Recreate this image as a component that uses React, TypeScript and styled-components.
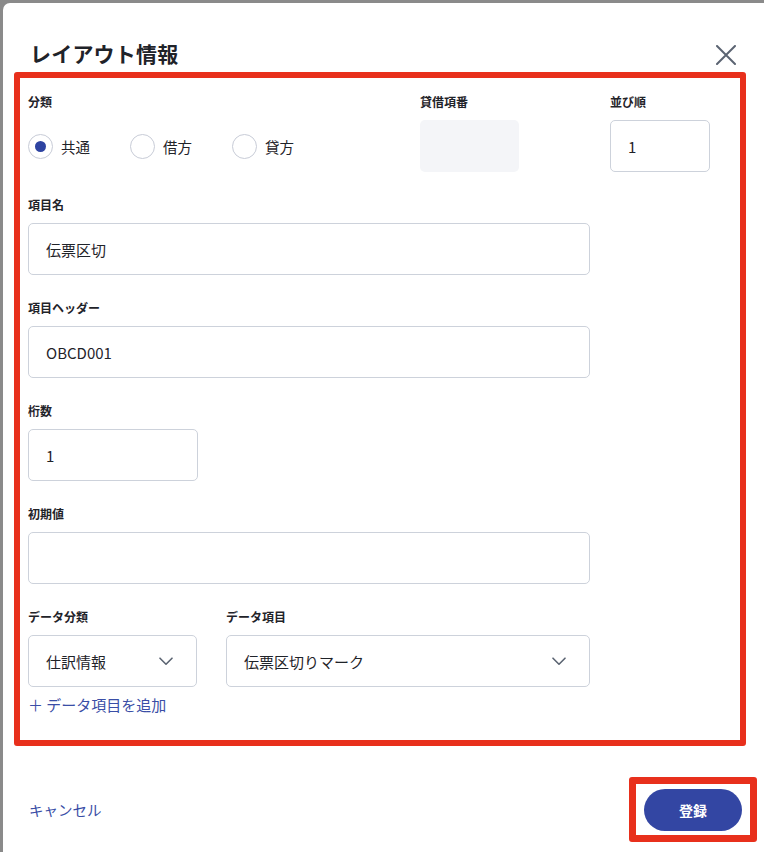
import styled, { createGlobalStyle } from 'styled-components';
import { useState } from 'react';

const GlobalStyle = createGlobalStyle`
  html, body {
    margin: 0;
    padding: 0;
    overflow: hidden;
    background-color: #8a8a8a;
  }
  * {
    box-sizing: border-box;
  }
`;

const FONT = `'Noto Sans CJK JP', 'Noto Sans', sans-serif`;

type Option = { value: string; label: string };

const kinds: Option[] = [
  { value: 'common', label: '共通' },
  { value: 'debit', label: '借方' },
  { value: 'credit', label: '貸方' },
];

const Chevron = () => (
  <svg width="14" height="9" viewBox="0 0 14 9" fill="none">
    <path d="M1 1.2 7 7.2 13 1.2" stroke="#5b6472" strokeWidth="1.6" strokeLinecap="round" strokeLinejoin="round" />
  </svg>
);

export default () => {
  const [kind, setKind] = useState('common');

  return (
    <>
      <GlobalStyle />
      <Modal>
        <Header>
          <Title>レイアウト情報</Title>
          <CloseButton aria-label="閉じる">
            <svg width="20" height="20" viewBox="0 0 20 20" fill="none">
              <path d="M1 1 19 19M19 1 1 19" stroke="#5b6472" strokeWidth="2" strokeLinecap="round" />
            </svg>
          </CloseButton>
        </Header>

        <FormArea>
          <TopRow>
            <Field>
              <Label>分類</Label>
              <RadioGroup>
                {kinds.map((k) => (
                  <RadioItem key={k.value} onClick={() => setKind(k.value)}>
                    <RadioCircle $checked={kind === k.value} />
                    <span>{k.label}</span>
                  </RadioItem>
                ))}
              </RadioGroup>
            </Field>
            <Field>
              <Label>貸借項番</Label>
              <DisabledBox />
            </Field>
            <Field>
              <Label>並び順</Label>
              <Input $width={100} defaultValue="1" />
            </Field>
          </TopRow>

          <Field>
            <Label>項目名</Label>
            <Input $width={562} defaultValue="伝票区切" />
          </Field>

          <Field>
            <Label>項目ヘッダー</Label>
            <Input $width={562} defaultValue="OBCD001" />
          </Field>

          <Field>
            <Label>桁数</Label>
            <Input $width={170} defaultValue="1" />
          </Field>

          <Field>
            <Label>初期値</Label>
            <Input $width={562} defaultValue="" />
          </Field>

          <DataRow>
            <Field>
              <Label>データ分類</Label>
              <Select $width={169}>
                <span>仕訳情報</span>
                <Chevron />
              </Select>
            </Field>
            <Field>
              <Label>データ項目</Label>
              <Select $width={364}>
                <span>伝票区切りマーク</span>
                <Chevron />
              </Select>
            </Field>
          </DataRow>

          <AddLink>＋ データ項目を追加</AddLink>
        </FormArea>

        <Footer>
          <TextLink>キャンセル</TextLink>
          <SubmitFrame>
            <SubmitButton>登録</SubmitButton>
          </SubmitFrame>
        </Footer>
      </Modal>
    </>
  );
};

const Modal = styled.div`
  margin: 3px 0 0 3px;
  width: calc(100vw - 3px);
  height: calc(100vh - 3px);
  background-color: #ffffff;
  border-top-left-radius: 7px;
  display: flex;
  flex-direction: column;
  font-family: ${FONT};
  color: #1f2329;
`;

const Header = styled.div`
  display: flex;
  align-items: center;
  justify-content: space-between;
  padding: 30px 28px 0 27px;
  height: 69px;
`;

const Title = styled.h1`
  margin: 0;
  font-size: 21px;
  font-weight: 700;
  line-height: 30px;
  letter-spacing: 0.2px;
  color: #1f2329;
`;

const CloseButton = styled.button`
  border: 0;
  padding: 0;
  margin-top: 4px;
  background: none;
  display: flex;
  cursor: pointer;
`;

const FormArea = styled.div`
  margin: 0 18px 0 11px;
  border: 6px solid #e8301c;
  border-radius: 3px;
  padding: 15px 8px 25px 8px;
  display: flex;
  flex-direction: column;
  gap: 24px;
`;

const TopRow = styled.div`
  display: grid;
  grid-template-columns: 392px 190px 100px;
`;

const DataRow = styled.div`
  display: flex;
  gap: 29px;
`;

const Field = styled.div`
  display: flex;
  flex-direction: column;
`;

const Label = styled.label`
  font-size: 12px;
  font-weight: 700;
  line-height: 18px;
  margin-bottom: 9px;
  color: #1f2329;
`;

const Input = styled.input<{ $width: number }>`
  width: ${(p) => p.$width}px;
  height: 52px;
  border: 1px solid #cdd2db;
  border-radius: 5px;
  padding: 0 17px;
  font-family: ${FONT};
  font-size: 15px;
  color: #1f2329;
  background: #fff;
  outline: none;
`;

const DisabledBox = styled.div`
  width: 99px;
  height: 52px;
  border-radius: 5px;
  background-color: #f4f5f8;
`;

const RadioGroup = styled.div`
  display: flex;
  align-items: center;
  height: 52px;
  gap: 40px;
`;

const RadioItem = styled.label`
  display: flex;
  align-items: center;
  gap: 8px;
  font-size: 14.5px;
  cursor: pointer;
`;

const RadioCircle = styled.span<{ $checked: boolean }>`
  width: 25px;
  height: 25px;
  border-radius: 50%;
  border: 1.5px solid #c8ccd7;
  display: flex;
  align-items: center;
  justify-content: center;
  &::after {
    content: '';
    width: 11px;
    height: 11px;
    border-radius: 50%;
    background-color: ${(p) => (p.$checked ? '#2e43a1' : 'transparent')};
  }
`;

const Select = styled.div<{ $width: number }>`
  width: ${(p) => p.$width}px;
  height: 52px;
  border: 1px solid #cdd2db;
  border-radius: 5px;
  padding: 0 23px 0 17px;
  display: flex;
  align-items: center;
  justify-content: space-between;
  font-size: 15px;
  cursor: pointer;
`;

const AddLink = styled.a`
  margin-top: -16px;
  padding-left: 0;
  font-size: 15px;
  line-height: 20px;
  color: #3a4ea6;
  cursor: pointer;
`;

const Footer = styled.div`
  display: flex;
  align-items: center;
  justify-content: space-between;
  padding: 31px 7px 0 26px;
`;

const TextLink = styled.a`
  font-size: 14.5px;
  color: #3a4ea6;
  cursor: pointer;
`;

const SubmitFrame = styled.div`
  border: 7px solid #e8301c;
  border-radius: 3px;
  padding: 5px 8px 4px 8px;
`;

const SubmitButton = styled.button`
  width: 98px;
  height: 42px;
  border: 0;
  border-radius: 21px;
  background-color: #3346a3;
  color: #ffffff;
  font-family: ${FONT};
  font-size: 14px;
  font-weight: 700;
  cursor: pointer;
`;
